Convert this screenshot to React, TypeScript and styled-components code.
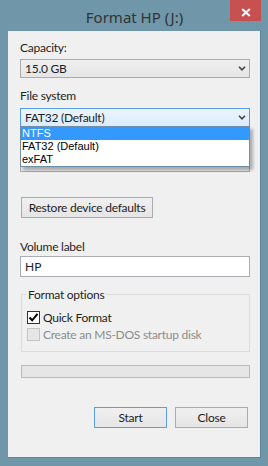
import React from "react";
import styled, { createGlobalStyle } from "styled-components";

const uiFont = `Lato, "Noto Sans", sans-serif`;

const GlobalStyle = createGlobalStyle`
  html, body {
    margin: 0;
    padding: 0;
    background: #6f97a9;
  }
  body {
    font-family: ${uiFont};
    font-size: 12px;
    letter-spacing: -0.25px;
    color: #1e1e1e;
  }
  * {
    box-sizing: border-box;
  }
`;

const Window = styled.div`
  width: 268px;
  height: 466px;
  background: #6f97a9;
  padding: 0 7px 8px 8px;
  display: flex;
  flex-direction: column;
`;

const TitleBar = styled.div`
  height: 31px;
  flex: none;
  display: grid;
  grid-template-columns: 1fr auto 1fr;
`;

const Title = styled.div`
  grid-column: 2;
  align-self: center;
  font-family: "Noto Sans", sans-serif;
  font-size: 15px;
  letter-spacing: 0;
  line-height: 20px;
  color: #333;
  padding-top: 2px;
`;

const CloseButton = styled.button`
  grid-column: 3;
  justify-self: end;
  align-self: start;
  width: 31px;
  height: 21px;
  border: none;
  padding: 3px 0 0;
  background: #c75050;
  display: flex;
  align-items: center;
  justify-content: center;
`;

const Client = styled.div`
  flex: 1;
  background: #f0f0f0;
  border-right: 1px solid #5e8597;
  border-bottom: 1px solid #5e8597;
  padding: 0 10px 0 12px;
  display: flex;
  flex-direction: column;
  white-space: nowrap;
`;

const FieldLabel = styled.div<{ $mt: number }>`
  margin-top: ${({ $mt }) => $mt}px;
  height: 15px;
  line-height: 15px;
`;

const Combo = styled.div<{ $mt: number; $open?: boolean }>`
  position: relative;
  margin-top: ${({ $mt }) => $mt}px;
  height: 19px;
  padding: 0 3px 0 4px;
  display: flex;
  align-items: center;
  justify-content: space-between;
  line-height: 15px;
  border: 1px solid ${({ $open }) => ($open ? "#569de5" : "#acacac")};
  background: ${({ $open }) =>
    $open
      ? "linear-gradient(#ebf4fc, #dcecfc)"
      : "linear-gradient(#f0f0f0, #e5e5e5)"};
`;

const DropList = styled.div`
  position: absolute;
  top: 100%;
  left: -1px;
  width: 230px;
  z-index: 2;
  background: #fff;
  border: 1px solid #6f8ea7;
  box-shadow: 3px 3px 3px rgba(0, 0, 0, 0.28);
  font-family: "Liberation Sans", Arial, sans-serif;
  font-size: 11px;
  letter-spacing: 0;
`;

const DropItem = styled.div<{ $selected?: boolean }>`
  height: 13px;
  line-height: 13px;
  padding-left: 1px;
  color: ${({ $selected }) => ($selected ? "#fff" : "#000")};
  background: ${({ $selected }) => ($selected ? "#3399ff" : "transparent")};
`;

const PushButton = styled.button<{ $default?: boolean; $width: number }>`
  width: ${({ $width }) => $width}px;
  height: 21px;
  padding: 0;
  font-family: ${uiFont};
  font-size: 12px;
  letter-spacing: -0.25px;
  color: #1e1e1e;
  white-space: nowrap;
  border: 1px solid ${({ $default }) => ($default ? "#5b9ee6" : "#acacac")};
  background: linear-gradient(#f0f0f0, #e5e5e5);
`;

const RestoreButton = styled(PushButton)`
  margin: 25px 0 0 1px;
`;

const TextInput = styled.input`
  margin-top: 2px;
  height: 21px;
  width: 100%;
  padding: 0 4px;
  font-family: ${uiFont};
  font-size: 12px;
  color: #1e1e1e;
  border: 1px solid #abadb3;
  background: #fff;
  outline: none;
`;

const GroupBox = styled.fieldset`
  margin: 10px 0 0 1px;
  padding: 0 0 8px 4px;
  border: 1px solid #dcdcdc;
  min-width: 0;

  legend {
    padding: 0 2px;
    line-height: 15px;
    height: 15px;
  }
`;

const CheckRow = styled.label<{ $disabled?: boolean; $first?: boolean }>`
  display: flex;
  align-items: center;
  gap: 3px;
  height: 17px;
  margin: ${({ $first }) => ($first ? "7px" : "0")} 0 0 1px;
  color: ${({ $disabled }) => ($disabled ? "#8c8c8c" : "#1e1e1e")};
`;

const CheckBox = styled.span<{ $disabled?: boolean }>`
  width: 13px;
  height: 13px;
  flex: none;
  display: flex;
  align-items: center;
  justify-content: center;
  border: 1px solid ${({ $disabled }) => ($disabled ? "#c4c4c4" : "#333")};
  background: ${({ $disabled }) => ($disabled ? "#e6e6e6" : "#fff")};
`;

const ProgressBar = styled.div`
  margin: 13px 0 0 1px;
  height: 13px;
  border: 1px solid #bcbcbc;
  background: #e6e6e6;
`;

const ButtonRow = styled.div`
  margin-top: 29px;
  padding-right: 2px;
  display: flex;
  justify-content: flex-end;
  gap: 8px;
`;

function Chevron() {
  return (
    <svg width="8" height="5" viewBox="0 0 8 5">
      <path d="M1 0.8 L4 3.8 L7 0.8" fill="none" stroke="#444" strokeWidth="1.6" />
    </svg>
  );
}

const fileSystems = ["NTFS", "FAT32 (Default)", "exFAT"];

export default function App() {
  return (
    <>
      <GlobalStyle />
      <Window>
        <TitleBar>
          <Title>Format HP (J:)</Title>
          <CloseButton aria-label="Close">
            <svg width="10" height="9" viewBox="0 0 10 9">
              <path d="M1.2 1 L8.8 8 M8.8 1 L1.2 8" stroke="#fff" strokeWidth="2" />
            </svg>
          </CloseButton>
        </TitleBar>
        <Client>
          <FieldLabel $mt={9}>Capacity:</FieldLabel>
          <Combo $mt={4}>
            <span>15.0 GB</span>
            <Chevron />
          </Combo>

          <FieldLabel $mt={10}>File system</FieldLabel>
          <Combo $mt={5} $open>
            <span>FAT32 (Default)</span>
            <Chevron />
            <DropList>
              {fileSystems.map((fs, i) => (
                <DropItem key={fs} $selected={i === 0}>
                  {fs}
                </DropItem>
              ))}
            </DropList>
          </Combo>

          {/* allocation unit row sits under the open list, only its edge shows */}
          <FieldLabel $mt={7} />
          <Combo $mt={4} />

          <RestoreButton $width={132}>Restore device defaults</RestoreButton>

          <FieldLabel $mt={21}>Volume label</FieldLabel>
          <TextInput defaultValue="HP" />

          <GroupBox>
            <legend>Format options</legend>
            <CheckRow $first>
              <CheckBox>
                <svg width="11" height="11" viewBox="0 0 11 11">
                  <path d="M1.5 5.5 L4.2 8.3 L9.5 1.8" fill="none" stroke="#000" strokeWidth="2" />
                </svg>
              </CheckBox>
              Quick Format
            </CheckRow>
            <CheckRow $disabled>
              <CheckBox $disabled />
              Create an MS-DOS startup disk
            </CheckRow>
          </GroupBox>

          <ProgressBar />

          <ButtonRow>
            <PushButton $default $width={73}>
              Start
            </PushButton>
            <PushButton $width={73}>Close</PushButton>
          </ButtonRow>
        </Client>
      </Window>
    </>
  );
}
